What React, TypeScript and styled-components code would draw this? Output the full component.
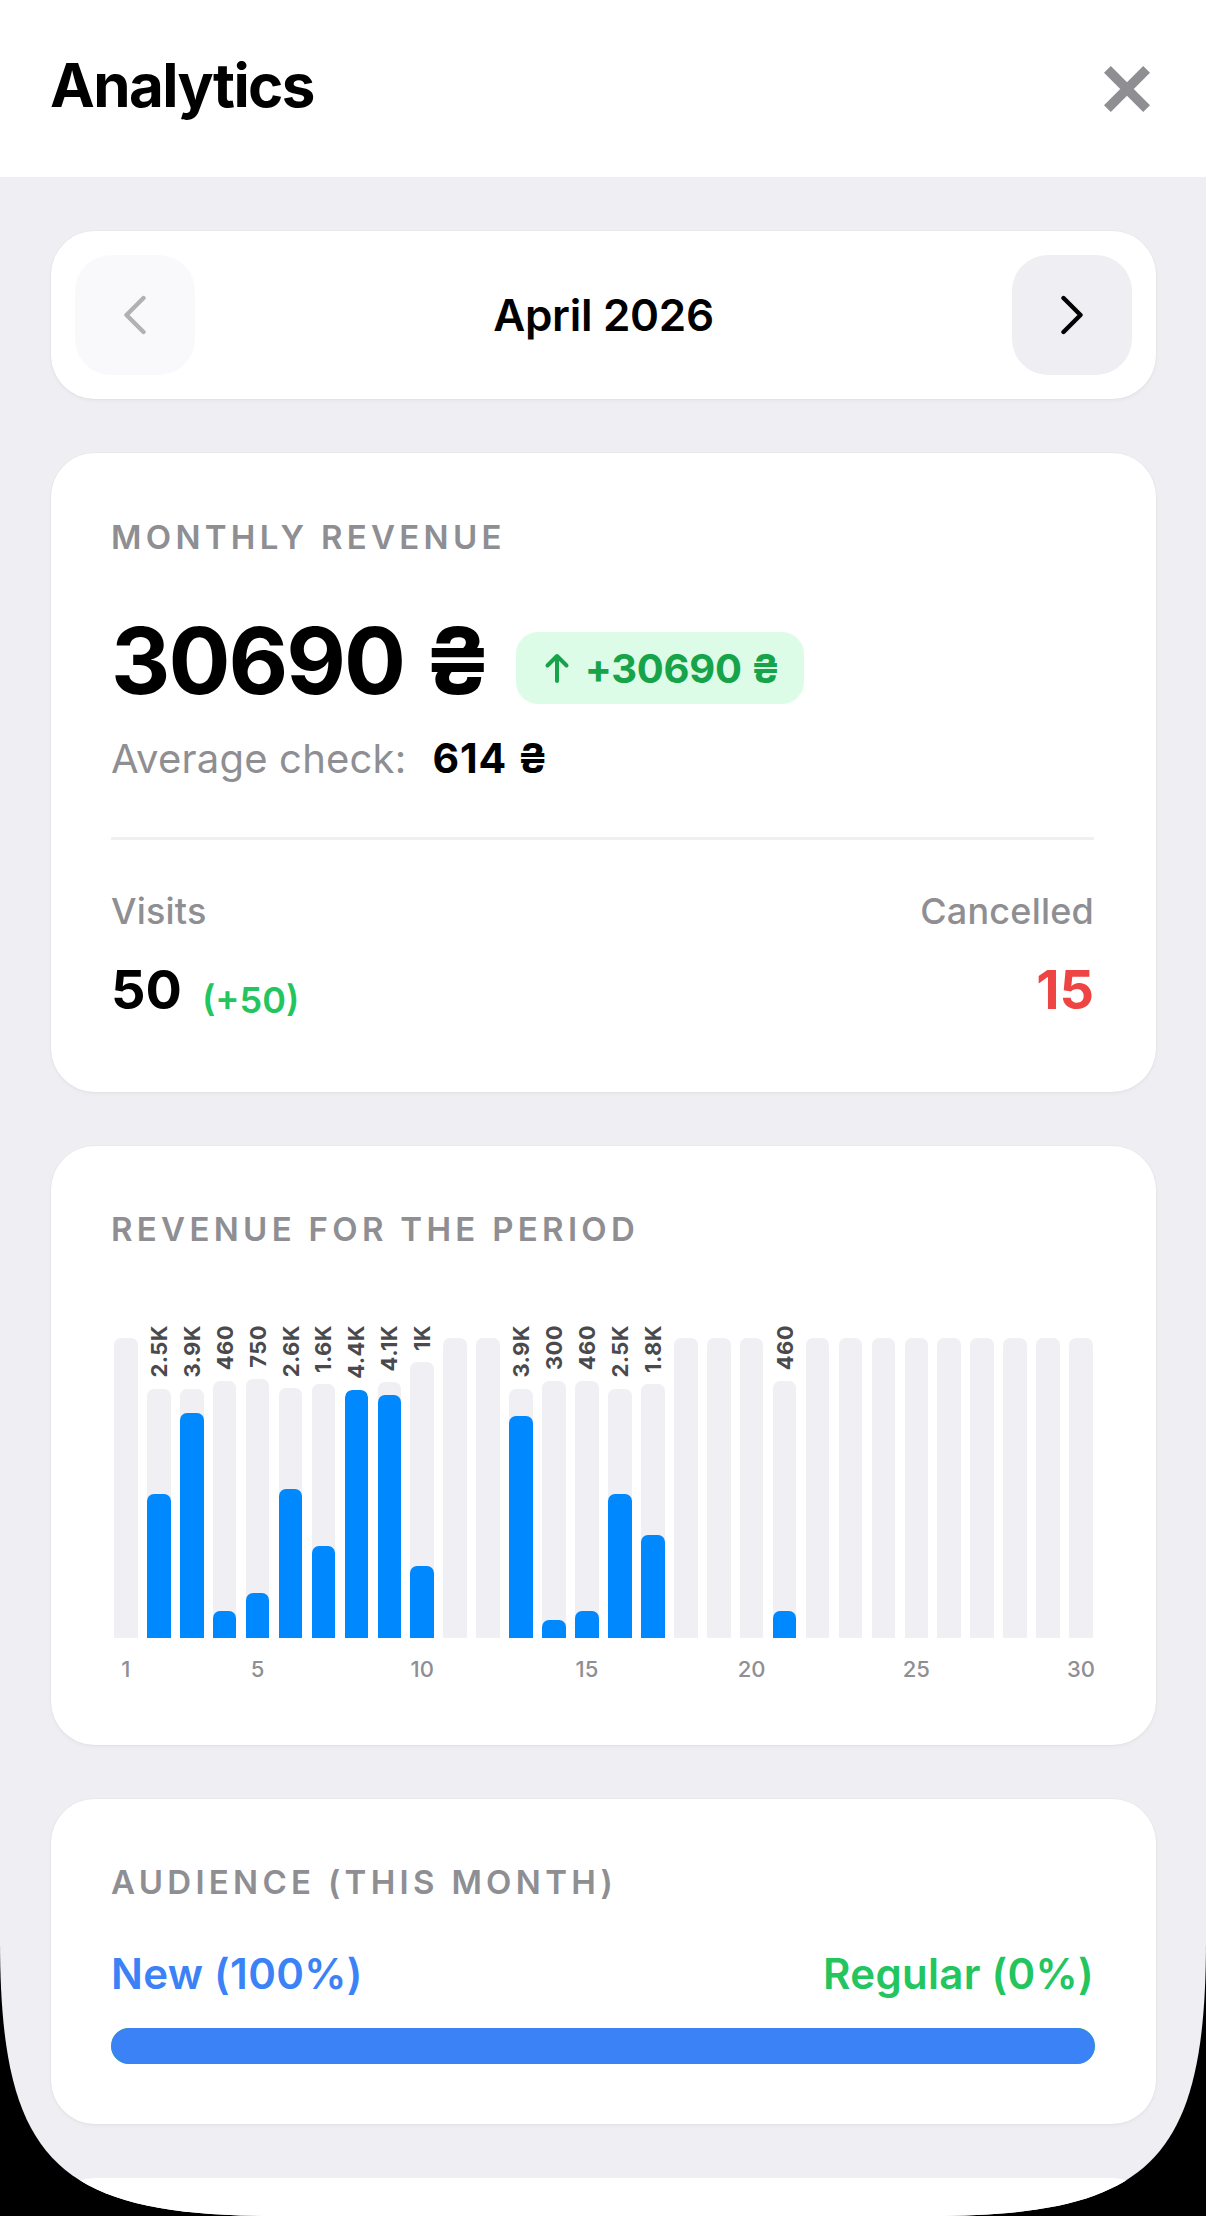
import React from "react";
import styled, { createGlobalStyle } from "styled-components";

const GlobalStyle = createGlobalStyle`
  html, body {
    margin: 0;
    padding: 0;
    background: #000;
  }
  body {
    font-family: Inter, "Noto Sans", "DejaVu Sans", sans-serif;
    -webkit-font-smoothing: antialiased;
  }
  *, *::before, *::after {
    box-sizing: border-box;
  }
`;

const GRAY = "#8e8e93";
const PAGE_BG = "#eeeef3";

type Day = { value: number; label?: string };

// Revenue per day of the month; label is the short figure printed above a bar.
const DAYS: Day[] = [
  { value: 0 },
  { value: 2540, label: "2.5K" },
  { value: 3960, label: "3.9K" },
  { value: 470, label: "460" },
  { value: 760, label: "750" },
  { value: 2630, label: "2.6K" },
  { value: 1600, label: "1.6K" },
  { value: 4400, label: "4.4K" },
  { value: 4180, label: "4.1K" },
  { value: 1150, label: "1K" },
  { value: 0 },
  { value: 0 },
  { value: 3920, label: "3.9K" },
  { value: 310, label: "300" },
  { value: 470, label: "460" },
  { value: 2540, label: "2.5K" },
  { value: 1780, label: "1.8K" },
  { value: 0 },
  { value: 0 },
  { value: 0 },
  { value: 470, label: "460" },
  { value: 0 },
  { value: 0 },
  { value: 0 },
  { value: 0 },
  { value: 0 },
  { value: 0 },
  { value: 0 },
  { value: 0 },
  { value: 0 },
];

const TICKS = new Set([1, 5, 10, 15, 20, 25, 30]);

// Sheet outline with continuous (squircle-like) bottom corners.
const SHEET_OUTLINE =
  "M0 0 H1206 V1940 C1206 2160.8 1150.8 2216 930 2216 H276 C55.2 2216 0 2160.8 0 1940 Z";

const Sheet = styled.div`
  width: 1206px;
  height: 2216px;
  overflow: hidden;
  background: ${PAGE_BG};
  clip-path: path("${SHEET_OUTLINE}");
  display: flex;
  flex-direction: column;
`;

const Header = styled.header`
  flex-shrink: 0;
  height: 177px;
  background: #fff;
  display: flex;
  align-items: center;
  justify-content: space-between;
  padding: 0 56px 0 50px;
`;

const Title = styled.h1`
  margin: -8px 0 0;
  font-size: 60px;
  line-height: 72px;
  font-weight: 700;
  letter-spacing: -1.6px;
  color: #000;
`;

const CloseButton = styled.button`
  width: 46px;
  height: 46px;
  padding: 0;
  border: 0;
  background: none;
  display: flex;
  cursor: pointer;
`;

const Content = styled.main`
  display: flex;
  flex-direction: column;
  gap: 54px;
  padding: 54px 50px 0 51px;
`;

const Card = styled.section<{ $pt?: number; $pb?: number }>`
  flex-shrink: 0;
  background: #fff;
  border-radius: 44px;
  box-shadow: 0 2px 4px rgba(0, 0, 0, 0.04), 0 0 0 1px rgba(0, 0, 0, 0.02);
  padding: ${(p) => p.$pt ?? 63}px 62px ${(p) => p.$pb ?? 63}px 60px;
`;

const MonthCard = styled.section`
  flex-shrink: 0;
  background: #fff;
  border-radius: 44px;
  box-shadow: 0 2px 4px rgba(0, 0, 0, 0.04), 0 0 0 1px rgba(0, 0, 0, 0.02);
  padding: 24px;
  display: flex;
  align-items: center;
  justify-content: space-between;
`;

const NavButton = styled.button<{ $disabled?: boolean }>`
  width: 120px;
  height: 120px;
  border: 0;
  padding: 0;
  border-radius: 36px;
  background: ${PAGE_BG};
  display: flex;
  align-items: center;
  justify-content: center;
  opacity: ${(p) => (p.$disabled ? 0.3 : 1)};
  cursor: pointer;
`;

const MonthName = styled.div`
  font-size: 44px;
  line-height: 52px;
  font-weight: 600;
  letter-spacing: -0.3px;
  color: #000;
`;

const SectionTitle = styled.h2`
  margin: 0;
  font-size: 33px;
  line-height: 40px;
  font-weight: 600;
  letter-spacing: 4.3px;
  text-transform: uppercase;
  color: ${GRAY};
`;

const AmountRow = styled.div`
  display: flex;
  align-items: center;
  gap: 26px;
  margin-top: 49px;
`;

const Amount = styled.div`
  font-size: 92px;
  line-height: 110px;
  font-weight: 700;
  letter-spacing: -2px;
  color: #000;
`;

const Badge = styled.div`
  margin-top: 14px;
  height: 72px;
  display: flex;
  align-items: center;
  gap: 15px;
  padding: 0 24px 0 28px;
  border-radius: 22px;
  background: #dcfce7;
  color: #16a34a;
  font-size: 40px;
  font-weight: 700;
  letter-spacing: -0.3px;
`;

const AverageRow = styled.div`
  display: flex;
  align-items: baseline;
  gap: 26px;
  margin-top: 19px;
  font-size: 40px;
  line-height: 47px;
`;

const AverageLabel = styled.span`
  color: ${GRAY};
  font-weight: 400;
  letter-spacing: 0.2px;
`;

const AverageValue = styled.span`
  color: #000;
  font-size: 41px;
  font-weight: 700;
  letter-spacing: 0.8px;
`;

const Divider = styled.hr`
  margin: 55px 0 0;
  border: 0;
  height: 3px;
  background: #efeff4;
`;

const Stats = styled.div`
  display: flex;
  justify-content: space-between;
  margin-top: 49.5px;
`;

const Stat = styled.div<{ $align?: "left" | "right" }>`
  display: flex;
  flex-direction: column;
  align-items: ${(p) => (p.$align === "right" ? "flex-end" : "flex-start")};
  gap: 24.5px;
`;

const StatLabel = styled.div`
  font-size: 36px;
  line-height: 43px;
  font-weight: 500;
  letter-spacing: 0.2px;
  color: ${GRAY};
`;

const StatValueRow = styled.div`
  display: flex;
  align-items: flex-end;
  gap: 20px;
`;

const StatValue = styled.div<{ $color?: string }>`
  font-size: 54px;
  line-height: 65px;
  font-weight: 700;
  color: ${(p) => p.$color ?? "#000"};
`;

const StatDelta = styled.div`
  font-size: 36px;
  line-height: 43px;
  font-weight: 600;
  color: #22c55e;
`;

const Bars = styled.div`
  margin-top: 76px;
  height: 313px;
  display: flex;
  gap: 9.3px;
  padding: 0 1px 0 3px;
`;

const Column = styled.div`
  flex: 1;
  min-width: 0;
  display: flex;
  flex-direction: column;
  justify-content: flex-end;
`;

const BarLabel = styled.span`
  align-self: center;
  writing-mode: vertical-rl;
  transform: rotate(180deg);
  font-size: 22px;
  line-height: 22px;
  font-weight: 700;
  letter-spacing: 0.4px;
  white-space: nowrap;
  color: #4a4a4e;
  margin-bottom: 11px;
`;

const Track = styled.div<{ $full: boolean }>`
  ${(p) => (p.$full ? "height: 300px;" : "flex: 1;")}
  background: #efeff4;
  border-radius: 7px 7px 0 0;
  display: flex;
  flex-direction: column;
  justify-content: flex-end;
  overflow: hidden;
`;

const Fill = styled.div`
  width: 100%;
  background: #0088ff;
  border-radius: 7px 7px 0 0;
`;

const Axis = styled.div`
  margin-top: 18px;
  display: flex;
  gap: 9.3px;
  padding: 0 1px 0 3px;
`;

const Tick = styled.span`
  flex: 1;
  min-width: 0;
  display: flex;
  justify-content: center;
  font-size: 22px;
  line-height: 26px;
  font-weight: 500;
  color: ${GRAY};
  white-space: nowrap;
`;

const ShareRow = styled.div`
  margin-top: 48px;
  display: flex;
  justify-content: space-between;
  font-size: 42px;
  line-height: 48px;
  font-weight: 600;
  letter-spacing: 0.3px;
`;

const Share = styled.span<{ $color: string }>`
  color: ${(p) => p.$color};
`;

const Meter = styled.div`
  margin-top: 29.5px;
  margin-right: -1px;
  height: 36px;
  border-radius: 18px;
  background: #22c55e;
  overflow: hidden;
  display: flex;
`;

const MeterFill = styled.div`
  height: 100%;
  background: #3b82f6;
  border-radius: 18px;
`;

const TailCard = styled.section`
  flex-shrink: 0;
  height: 240px;
  background: #fff;
  border-radius: 44px;
`;

const CloseIcon = () => (
  <svg width="46" height="46" viewBox="0 0 46 46">
    <path
      d="M3.4 3.4 L42.6 42.6 M42.6 3.4 L3.4 42.6"
      stroke={GRAY}
      strokeWidth="9.6"
      fill="none"
    />
  </svg>
);

const Chevron = ({ dir, color }: { dir: "left" | "right"; color: string }) => (
  <svg width="24" height="40" viewBox="0 0 24 40">
    <polyline
      points={dir === "right" ? "3.5,3 20.5,20 3.5,37" : "20.5,3 3.5,20 20.5,37"}
      fill="none"
      stroke={color}
      strokeWidth="4.4"
      strokeLinecap="round"
      strokeLinejoin="round"
    />
  </svg>
);

const ArrowUp = () => (
  <svg width="26" height="32" viewBox="0 0 26 32">
    <path
      d="M13 29 V4 M3.5 13.5 L13 4 L22.5 13.5"
      fill="none"
      stroke="#16a34a"
      strokeWidth="4"
      strokeLinecap="round"
      strokeLinejoin="round"
    />
  </svg>
);

const RevenueChart = () => {
  const max = Math.max(...DAYS.map((d) => d.value));
  return (
    <>
      <Bars>
        {DAYS.map((d, i) => (
          <Column key={i}>
            {d.label && <BarLabel>{d.label}</BarLabel>}
            <Track $full={!d.label}>
              {d.value > 0 && <Fill style={{ height: `${(d.value / max) * 100}%` }} />}
            </Track>
          </Column>
        ))}
      </Bars>
      <Axis>
        {DAYS.map((_, i) => (
          <Tick key={i}>{TICKS.has(i + 1) ? i + 1 : ""}</Tick>
        ))}
      </Axis>
    </>
  );
};

export default function App() {
  return (
    <>
      <GlobalStyle />
      <Sheet>
        <Header>
          <Title>Analytics</Title>
          <CloseButton aria-label="Close">
            <CloseIcon />
          </CloseButton>
        </Header>

        <Content>
          <MonthCard>
            <NavButton $disabled aria-label="Previous month">
              <Chevron dir="left" color="#000" />
            </NavButton>
            <MonthName>April 2026</MonthName>
            <NavButton aria-label="Next month">
              <Chevron dir="right" color="#000" />
            </NavButton>
          </MonthCard>

          <Card $pt={64} $pb={70}>
            <SectionTitle>Monthly revenue</SectionTitle>
            <AmountRow>
              <Amount>30690 ₴</Amount>
              <Badge>
                <ArrowUp />
                <span>+30690 ₴</span>
              </Badge>
            </AmountRow>
            <AverageRow>
              <AverageLabel>Average check:</AverageLabel>
              <AverageValue>614 ₴</AverageValue>
            </AverageRow>
            <Divider />
            <Stats>
              <Stat>
                <StatLabel>Visits</StatLabel>
                <StatValueRow>
                  <StatValue>50</StatValue>
                  <StatDelta>(+50)</StatDelta>
                </StatValueRow>
              </Stat>
              <Stat $align="right">
                <StatLabel>Cancelled</StatLabel>
                <StatValue $color="#ef4444">15</StatValue>
              </Stat>
            </Stats>
          </Card>

          <Card>
            <SectionTitle>Revenue for the period</SectionTitle>
            <RevenueChart />
          </Card>

          <Card $pb={60}>
            <SectionTitle>Audience (this month)</SectionTitle>
            <ShareRow>
              <Share $color="#3b82f6">New (100%)</Share>
              <Share $color="#22c55e">Regular (0%)</Share>
            </ShareRow>
            <Meter>
              <MeterFill style={{ width: "100%" }} />
            </Meter>
          </Card>

          <TailCard />
        </Content>
      </Sheet>
    </>
  );
}
